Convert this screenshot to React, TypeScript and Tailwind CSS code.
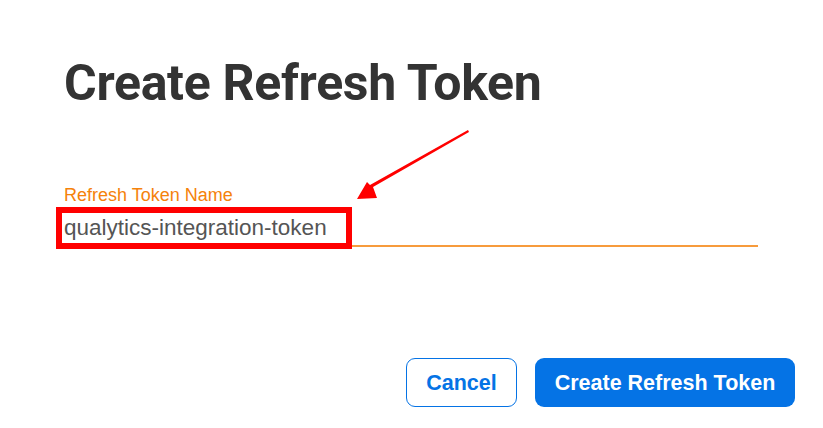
import React from "react";

export default function App() {
  const arial = { fontFamily: "'Liberation Sans', Arial, sans-serif" };
  return (
    <div className="w-[823px] h-[428px] bg-white relative overflow-hidden" style={arial}>
      <div className="flex flex-col pl-[64px] pr-[28px] pt-[53px]">
        <h1 className="text-[50px] leading-[60px] font-bold text-[#333333] tracking-[-0.3px]" style={{ fontFamily: "Roboto, 'Liberation Sans', sans-serif" }}>Create Refresh Token</h1>
        <div className="mt-[71px] w-[694px] flex flex-col">
          <label className="text-[18px] leading-[22px] text-[#f5820b]">Refresh Token Name</label>
          <div className="h-[39px] pt-[9px] text-[22.5px] leading-[25px] text-[#555555]">
            qualytics-integration-token
          </div>
          <div className="h-[2px] bg-[#f5820b] opacity-80" />
        </div>
        <div className="mt-[111px] flex justify-end gap-[18px]">
          <button className="w-[111px] h-[49px] pt-px rounded-[9px] border border-[#0573e5] text-[#0573e5] text-[21.5px] font-bold bg-white">Cancel</button>
          <button className="w-[260px] h-[49px] pt-px rounded-[9px] bg-[#0573e5] text-white text-[21.5px] font-bold">Create Refresh Token</button>
        </div>
      </div>
      <div className="absolute left-[56px] top-[207px] w-[296px] h-[42px] border-[6px] border-[#ff0000]" />
      <svg className="absolute left-0 top-0" width="823" height="428" viewBox="0 0 823 428">
        <polygon points="468,130 469,132 373,187 377,198 357,199 367,182 370,185" fill="#ff0000" />
      </svg>
    </div>
  );
}
